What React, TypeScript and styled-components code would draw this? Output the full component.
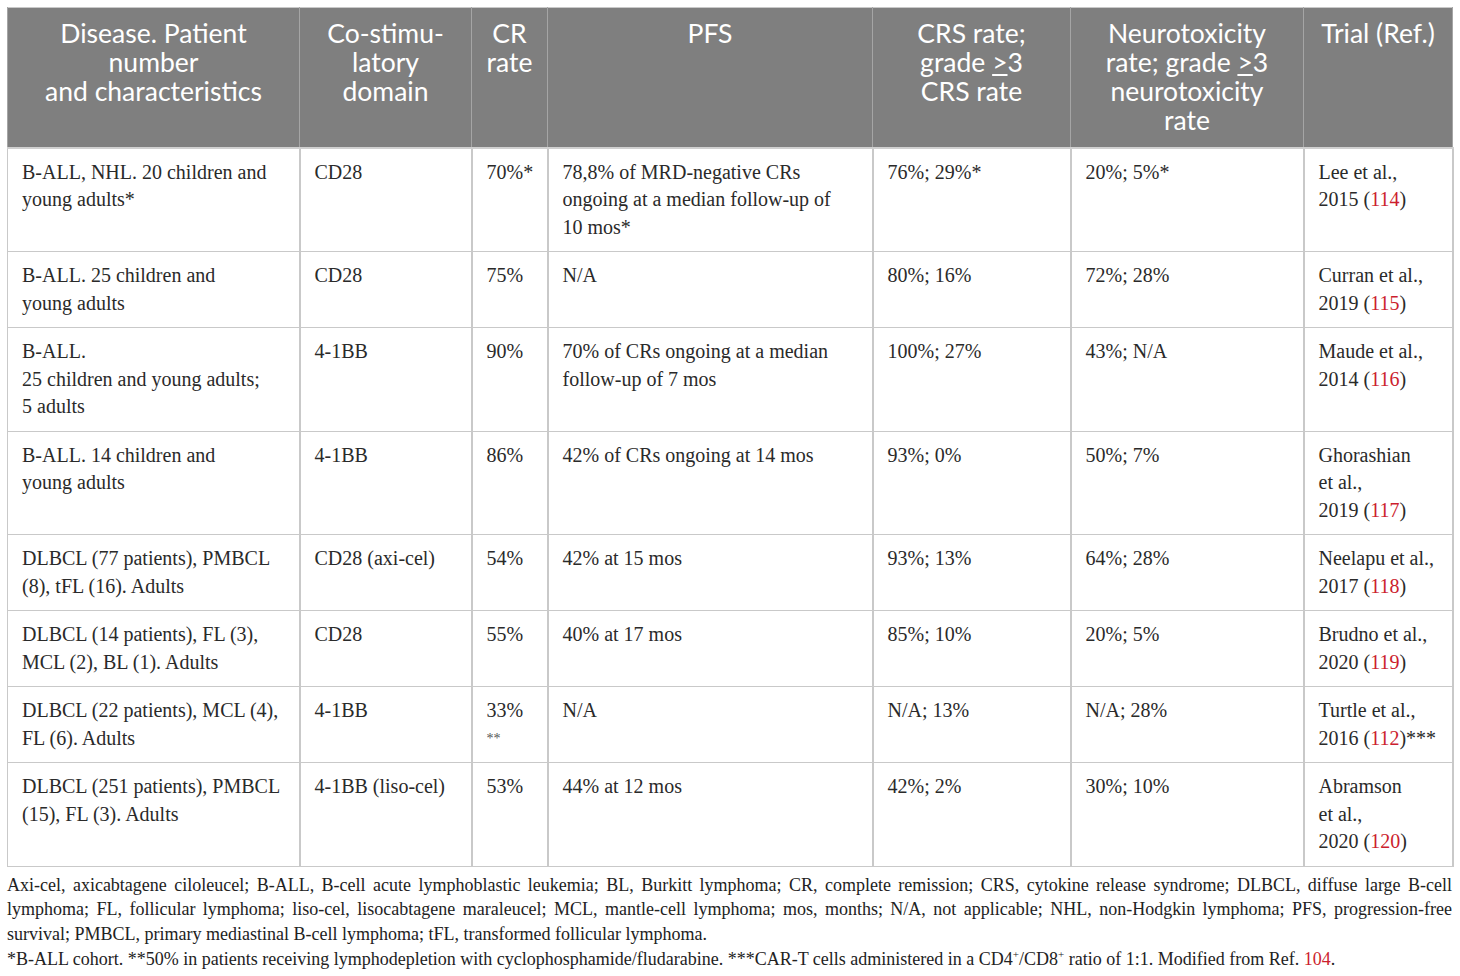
import React from 'react'
import styled, { createGlobalStyle } from 'styled-components';

const GlobalStyle = createGlobalStyle`
  body {
    margin: 0;
    background: #fff;
    font-family: "Liberation Serif", "DejaVu Serif", serif;
    color: #222;
  }
`;

type Row = {
  disease: string[];
  domain: string;
  cr: string;
  crNote?: string;
  pfs: string[];
  crs: string;
  neuro: string;
  authors: string[];
  year: string;
  ref: string;
  suffix?: string;
};

const rows: Row[] = [
  {
    disease: ['B-ALL, NHL. 20 children and', 'young adults*'],
    domain: 'CD28', cr: '70%*',
    pfs: ['78,8% of MRD-negative CRs', 'ongoing at a median follow-up of', '10 mos*'],
    crs: '76%; 29%*', neuro: '20%; 5%*',
    authors: ['Lee et al.,'], year: '2015', ref: '114',
  },
  {
    disease: ['B-ALL. 25 children and', 'young adults'],
    domain: 'CD28', cr: '75%', pfs: ['N/A'],
    crs: '80%; 16%', neuro: '72%; 28%',
    authors: ['Curran et al.,'], year: '2019', ref: '115',
  },
  {
    disease: ['B-ALL.', '25 children and young adults;', '5 adults'],
    domain: '4-1BB', cr: '90%',
    pfs: ['70% of CRs ongoing at a median', 'follow-up of 7 mos'],
    crs: '100%; 27%', neuro: '43%; N/A',
    authors: ['Maude et al.,'], year: '2014', ref: '116',
  },
  {
    disease: ['B-ALL. 14 children and', 'young adults'],
    domain: '4-1BB', cr: '86%', pfs: ['42% of CRs ongoing at 14 mos'],
    crs: '93%; 0%', neuro: '50%; 7%',
    authors: ['Ghorashian', 'et al.,'], year: '2019', ref: '117',
  },
  {
    disease: ['DLBCL (77 patients), PMBCL', '(8), tFL (16). Adults'],
    domain: 'CD28 (axi-cel)', cr: '54%', pfs: ['42% at 15 mos'],
    crs: '93%; 13%', neuro: '64%; 28%',
    authors: ['Neelapu et al.,'], year: '2017', ref: '118',
  },
  {
    disease: ['DLBCL (14 patients), FL (3),', 'MCL (2), BL (1). Adults'],
    domain: 'CD28', cr: '55%', pfs: ['40% at 17 mos'],
    crs: '85%; 10%', neuro: '20%; 5%',
    authors: ['Brudno et al.,'], year: '2020', ref: '119',
  },
  {
    disease: ['DLBCL (22 patients), MCL (4),', 'FL (6). Adults'],
    domain: '4-1BB', cr: '33%', crNote: '**', pfs: ['N/A'],
    crs: 'N/A; 13%', neuro: 'N/A; 28%',
    authors: ['Turtle et al.,'], year: '2016', ref: '112', suffix: '***',
  },
  {
    disease: ['DLBCL (251 patients), PMBCL', '(15), FL (3). Adults'],
    domain: '4-1BB (liso-cel)', cr: '53%', pfs: ['44% at 12 mos'],
    crs: '42%; 2%', neuro: '30%; 10%',
    authors: ['Abramson', 'et al.,'], year: '2020', ref: '120',
  },
];

const Lines = ({ lines }: { lines: string[] }) => (
  <>
    {lines.map((line, i) => (
      <React.Fragment key={i}>
        {i > 0 && <br/>}
        {line}
      </React.Fragment>
    ))}
  </>
)

const App = () => {
  return (
    <>
      <GlobalStyle/>
      <Page>
        <Table>
          <colgroup>
            <col style={{ width: 292 }}/>
            <col style={{ width: 172 }}/>
            <col style={{ width: 76 }}/>
            <col style={{ width: 325 }}/>
            <col style={{ width: 198 }}/>
            <col style={{ width: 233 }}/>
            <col style={{ width: 149 }}/>
          </colgroup>
          <thead>
            <tr>
              <HeadCell>Disease. Patient<br/>number<br/>and characteristics</HeadCell>
              <HeadCell>Co-stimu-<br/>latory<br/>domain</HeadCell>
              <HeadCell>CR<br/>rate</HeadCell>
              <HeadCell>PFS</HeadCell>
              <HeadCell>CRS rate;<br/>grade <Ge>&gt;</Ge>3<br/>CRS rate</HeadCell>
              <HeadCell>Neurotoxicity<br/>rate; grade <Ge>&gt;</Ge>3<br/>neurotoxicity<br/>rate</HeadCell>
              <HeadCell>Trial (Ref.)</HeadCell>
            </tr>
          </thead>
          <tbody>
            {rows.map((row, idx) => (
              <tr key={idx}>
                <Cell><Lines lines={row.disease}/></Cell>
                <Cell>{row.domain}</Cell>
                <Cell>
                  {row.cr}
                  {row.crNote && <Stars>{row.crNote}</Stars>}
                </Cell>
                <Cell><Lines lines={row.pfs}/></Cell>
                <Cell>{row.crs}</Cell>
                <Cell>{row.neuro}</Cell>
                <Cell>
                  <Lines lines={row.authors}/><br/>
                  {row.year} (<RefLink>{row.ref}</RefLink>){row.suffix}
                </Cell>
              </tr>
            ))}
          </tbody>
        </Table>
        <Footnotes>
          <Note $justify>
            Axi-cel, axicabtagene ciloleucel; B-ALL, B-cell acute lymphoblastic leukemia; BL, Burkitt lymphoma; CR, complete remission; CRS, cytokine release syndrome; DLBCL, diffuse large B-cell lymphoma; FL, follicular lymphoma; liso-cel, lisocabtagene maraleucel; MCL, mantle-cell lymphoma; mos, months; N/A, not applicable; NHL, non-Hodgkin lymphoma; PFS, progression-free survival; PMBCL, primary mediastinal B-cell lymphoma; tFL, transformed follicular lymphoma.
          </Note>
          <Note>
            *B-ALL cohort. **50% in patients receiving lymphodepletion with cyclophosphamide/fludarabine. ***CAR-T cells administered in a CD4<sup>+</sup>/CD8<sup>+</sup> ratio of 1:1. Modified from Ref. <RefLink>104</RefLink>.
          </Note>
        </Footnotes>
      </Page>
    </>
  )
}

const Page = styled.div`
  padding: 7px 8px 0 7px;
`;

const Table = styled.table`
  width: 1445px;
  table-layout: fixed;
  border-collapse: collapse;
  border: 1px solid #c9c9c9;
`;

const HeadCell = styled.th`
  background-color: #7f7f7f;
  color: #fff;
  font-family: "Lato", "Open Sans", sans-serif;
  font-weight: 400;
  font-size: 26.5px;
  line-height: 29px;
  text-align: center;
  vertical-align: top;
  height: 140px;
  box-sizing: border-box;
  padding: 11px 4px 0;
  border-left: 1px solid #a5a5a5;
  border-right: 1px solid #a5a5a5;
  border-bottom: 2px solid #d0d0d0;
`;

const Ge = styled.span`
  text-decoration: underline;
  text-underline-offset: 2px;
`;

const Cell = styled.td`
  vertical-align: top;
  font-size: 20px;
  line-height: 27.5px;
  color: #2a2a2a;
  padding: 10px 6px 10px 14px;
  border: 1px solid #c9c9c9;
  border-width: 1px 2px 1px 1px;
`;

const Stars = styled.span`
  display: block;
  font-size: 14px;
  line-height: 27.5px;
  color: #555;
`;

const RefLink = styled.span`
  color: #cc1e2e;
`;

const Footnotes = styled.div`
  width: 1445px;
  padding-top: 6px;
  font-size: 18px;
  line-height: 24.7px;
  color: #222;
`;

const Note = styled.p<{ $justify?: boolean }>`
  margin: 0;
  text-align: ${(p) => (p.$justify ? 'justify' : 'left')};

  sup {
    font-size: 11px;
    line-height: 0;
  }
`;

export default App
